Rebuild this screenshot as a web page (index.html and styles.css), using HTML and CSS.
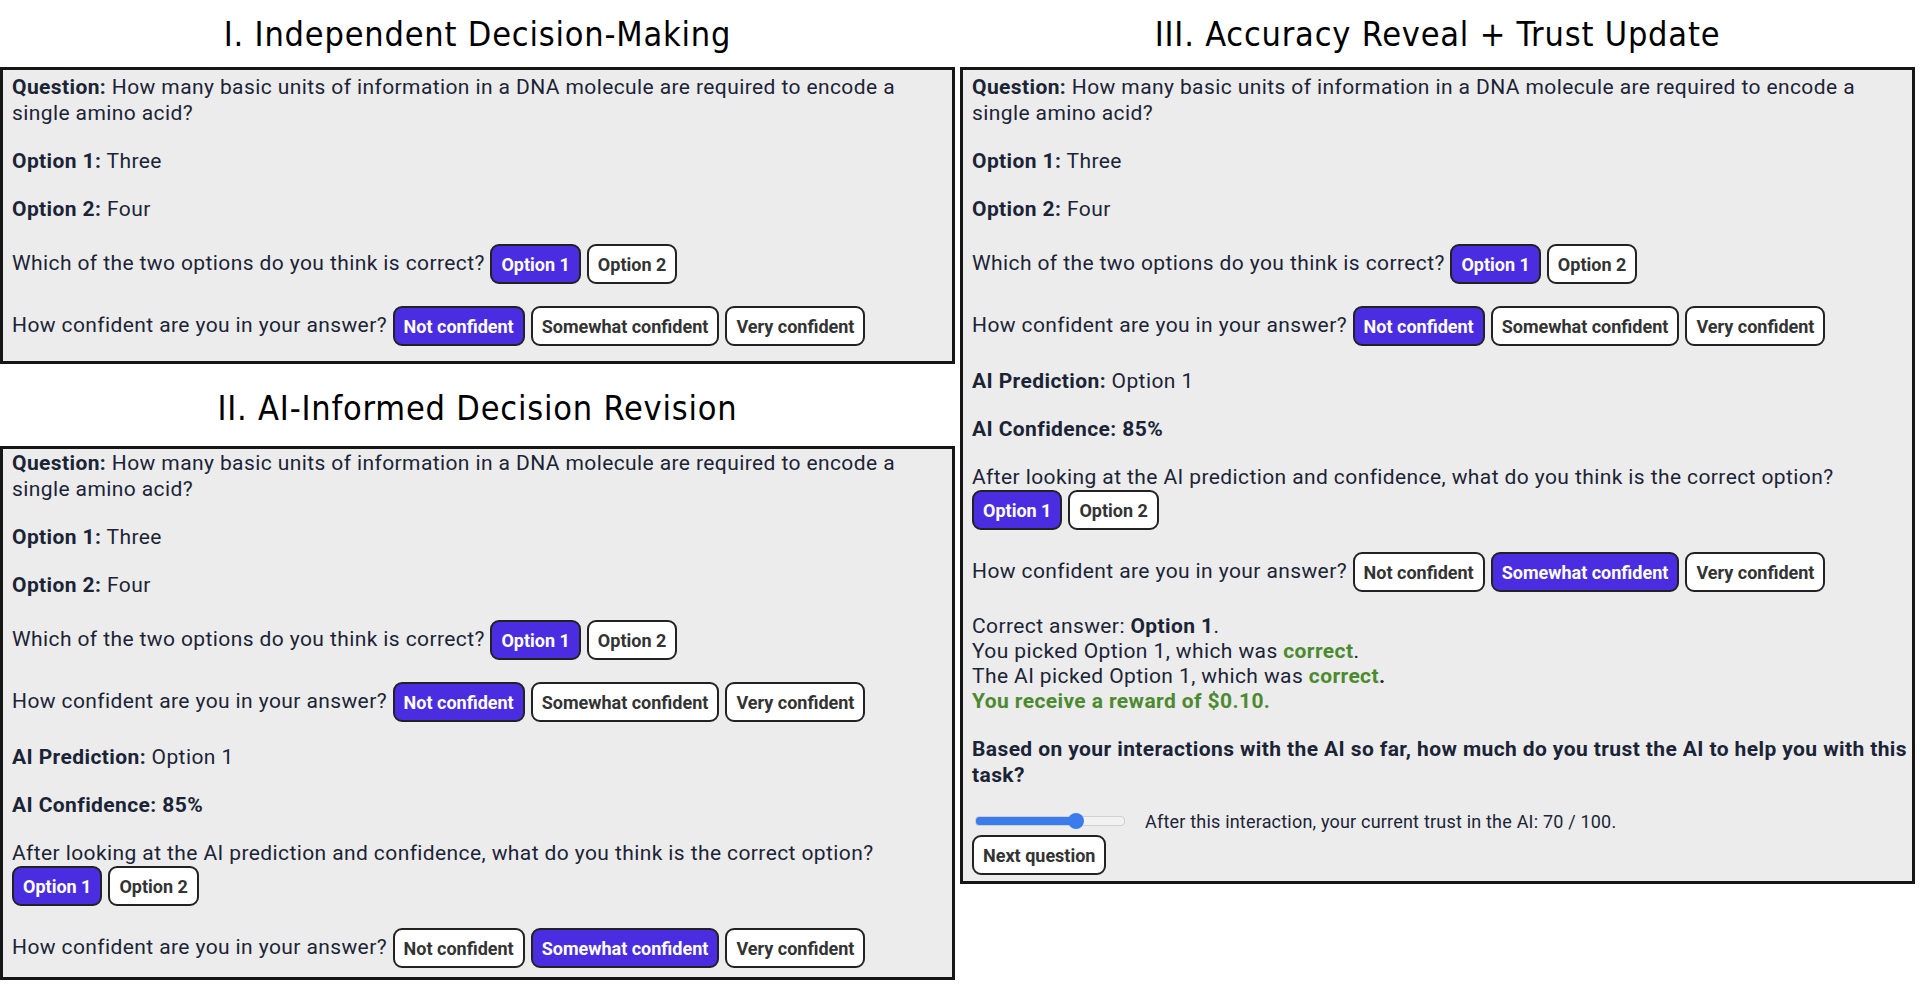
FILE: index.html
```html
<!DOCTYPE html>
<html lang="en">
<head>
    <meta charset="UTF-8">
    <meta name="viewport" content="width=device-width, initial-scale=1.0">
    <title>Decision Study Stages</title>
    <link rel="stylesheet" href="styles.css">
</head>
<body>
    <div class="page">
        <div class="column">
            <h2 class="stage-title">I. Independent Decision-Making</h2>
            <div class="task-box box-first">
                <p><b>Question:</b> How many basic units of information in a DNA molecule are required to encode a single amino acid?</p>
                <p><b>Option 1:</b> Three</p>
                <p><b>Option 2:</b> Four</p>
                <p>Which of the two options do you think is correct? <span class="choice-group"><button class="choice selected">Option 1</button><button class="choice">Option 2</button></span></p>
                <p>How confident are you in your answer? <span class="choice-group"><button class="choice selected">Not confident</button><button class="choice">Somewhat confident</button><button class="choice">Very confident</button></span></p>
            </div>

            <h2 class="stage-title stage-title-lower">II. AI-Informed Decision Revision</h2>
            <div class="task-box box-second">
                <p><b>Question:</b> How many basic units of information in a DNA molecule are required to encode a single amino acid?</p>
                <p><b>Option 1:</b> Three</p>
                <p><b>Option 2:</b> Four</p>
                <p>Which of the two options do you think is correct? <span class="choice-group"><button class="choice selected">Option 1</button><button class="choice">Option 2</button></span></p>
                <p>How confident are you in your answer? <span class="choice-group"><button class="choice selected">Not confident</button><button class="choice">Somewhat confident</button><button class="choice">Very confident</button></span></p>
                <p><b>AI Prediction:</b> Option 1</p>
                <p><b>AI Confidence: 85%</b></p>
                <p>After looking at the AI prediction and confidence, what do you think is the correct option? <span class="choice-group"><button class="choice selected">Option 1</button><button class="choice">Option 2</button></span></p>
                <p>How confident are you in your answer? <span class="choice-group"><button class="choice">Not confident</button><button class="choice selected">Somewhat confident</button><button class="choice">Very confident</button></span></p>
            </div>
        </div>

        <div class="column">
            <h2 class="stage-title">III. Accuracy Reveal + Trust Update</h2>
            <div class="task-box box-third">
                <p><b>Question:</b> How many basic units of information in a DNA molecule are required to encode a single amino acid?</p>
                <p><b>Option 1:</b> Three</p>
                <p><b>Option 2:</b> Four</p>
                <p>Which of the two options do you think is correct? <span class="choice-group"><button class="choice selected">Option 1</button><button class="choice">Option 2</button></span></p>
                <p>How confident are you in your answer? <span class="choice-group"><button class="choice selected">Not confident</button><button class="choice">Somewhat confident</button><button class="choice">Very confident</button></span></p>
                <p><b>AI Prediction:</b> Option 1</p>
                <p><b>AI Confidence: 85%</b></p>
                <p>After looking at the AI prediction and confidence, what do you think is the correct option? <span class="choice-group"><button class="choice selected">Option 1</button><button class="choice">Option 2</button></span></p>
                <p>How confident are you in your answer? <span class="choice-group"><button class="choice">Not confident</button><button class="choice selected">Somewhat confident</button><button class="choice">Very confident</button></span></p>
                <div class="reveal">
                    <div>Correct answer: <b>Option 1</b>.</div>
                    <div>You picked Option 1, which was <b class="good">correct</b>.</div>
                    <div>The AI picked Option 1, which was <b class="good">correct</b><b>.</b></div>
                    <div><b class="good">You receive a reward of $0.10.</b></div>
                </div>
                <p><b>Based on your interactions with the AI so far, how much do you trust the AI to help you with this task?</b></p>
                <div class="trust-row">
                    <input class="trust-slider" type="range" min="0" max="100" value="70" style="--fill: 70%">
                    <span>After this interaction, your current trust in the AI: 70 / 100.</span>
                </div>
                <button class="choice">Next question</button>
            </div>
        </div>
    </div>
</body>
</html>
```

FILE: styles.css
```css
body {
    margin: 0;
    font-family: Roboto, "Liberation Sans", sans-serif;
    color: #1b2436;
    background: #fff;
}

.page {
    display: grid;
    grid-template-columns: 1fr 1fr;
    column-gap: 5px;
    padding-right: 5px;
    align-items: start;
}

.stage-title {
    font-family: "DejaVu Sans Condensed", "DejaVu Sans", sans-serif;
    font-weight: normal;
    font-size: 34px;
    line-height: 40px;
    letter-spacing: 0.8px;
    text-align: center;
    color: #000;
    margin: 14px 0 13px;
}

.stage-title-lower {
    margin: 24px 0 18px;
}

.task-box {
    background: #ececec;
    border: 3px solid #161616;
    padding: 4px 2px 15px 9px;
}

.box-second {
    padding-top: 1px;
    padding-bottom: 9px;
}

.box-third {
    padding-bottom: 6px;
}

.task-box p {
    margin: 0 0 22px;
    font-size: 21px;
    line-height: 26px;
    letter-spacing: 0.4px;
}

.task-box p:last-child {
    margin-bottom: 0;
}

.choice-group {
    display: inline-flex;
    gap: 6px;
    vertical-align: middle;
}

.choice {
    font-family: Roboto, "Liberation Sans", sans-serif;
    font-weight: bold;
    font-size: 18px;
    height: 40px;
    padding: 0 9px;
    color: #333;
    background: #fff;
    border: 2px solid #222;
    border-radius: 9px;
    cursor: pointer;
}

.choice.selected {
    background: #4a2de0;
    color: #fff;
}

.reveal {
    font-size: 21px;
    line-height: 25px;
    letter-spacing: 0.4px;
    margin-bottom: 22px;
}

.good {
    color: #4c8a30;
}

.trust-row {
    display: flex;
    align-items: center;
    gap: 20px;
    height: 22px;
    margin: 0 0 3px 3px;
    font-size: 18px;
    letter-spacing: 0.2px;
}

.trust-slider {
    -webkit-appearance: none;
    appearance: none;
    width: 148px;
    height: 8px;
    margin: 0;
    border: 1px solid #d0d0d0;
    border-radius: 4px;
    background: linear-gradient(to right, #3b7ced 0 var(--fill), #f2f2f2 var(--fill) 100%);
}

.trust-slider::-webkit-slider-thumb {
    -webkit-appearance: none;
    width: 16px;
    height: 16px;
    border: none;
    border-radius: 50%;
    background: #3b7ced;
}
```
